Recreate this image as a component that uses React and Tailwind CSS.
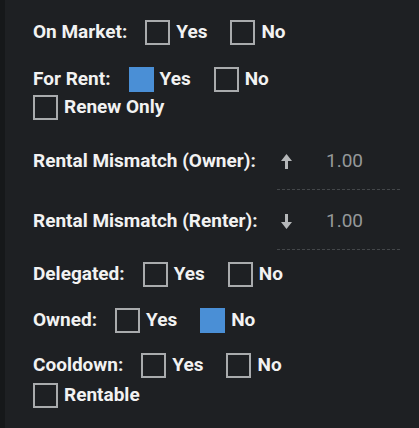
import React from 'react';

const Box = ({ checked }) => (
  <span
    className={`inline-block w-[25px] h-[25px] shrink-0 ${
      checked ? 'bg-[#4a8fd6]' : 'border-2 border-[#a9abad]'
    }`}
  />
);

const Check = ({ label, checked }) => (
  <label className="flex items-center gap-[6px]">
    <Box checked={checked} />
    <span>{label}</span>
  </label>
);

const YesNo = ({ title, yes, no, className = '' }) => (
  <div className={`flex items-center h-[25px] ${className}`}>
    <span className="mr-[18px]">{title}</span>
    <div className="flex items-center gap-[23px]">
      <Check label="Yes" checked={yes} />
      <Check label="No" checked={no} />
    </div>
  </div>
);

const Arrow = ({ down }) => (
  <svg width="13" height="17" viewBox="0 0 13 17" className={down ? 'rotate-180' : ''}>
    <path d="M6.5 1 L12 8 L8 8 L8 16 L5 16 L5 8 L1 8 Z" fill="#b5b7b9" />
  </svg>
);

const Mismatch = ({ title, down, className = '' }) => (
  <div className={`flex items-start ${className}`}>
    <span className="w-[244px] h-[24px] leading-[24px]">{title}</span>
    <div className="w-[123px] h-[41px] border-b border-dashed border-[#44474a] flex items-start">
      <div className="h-[24px] flex items-center pl-[3px] w-[49px]">
        <Arrow down={down} />
      </div>
      <span className="h-[24px] leading-[24px] font-normal text-[#95989a]">1.00</span>
    </div>
  </div>
);

export default function App() {
  return (
    <div className="w-[419px] h-[428px] flex bg-[#1e2023] overflow-hidden" style={{ fontFamily: 'Roboto, "Liberation Sans", sans-serif' }}>
      <div className="w-[5px] bg-[#16181a] shrink-0" />
      <div className="pl-[28px] pt-[20px] flex flex-col text-[19px] font-bold text-[#f2f2f2]">
        <YesNo title="On Market:" />
        <YesNo title="For Rent:" yes className="mt-[22px]" />
        <div className="flex items-center h-[25px] mt-[3px]">
          <Check label="Renew Only" />
        </div>
        <Mismatch title="Rental Mismatch (Owner):" className="mt-[29px]" />
        <Mismatch title="Rental Mismatch (Renter):" down className="mt-[19px]" />
        <YesNo title="Delegated:" className="mt-[12px]" />
        <YesNo title="Owned:" no className="mt-[21px]" />
        <YesNo title="Cooldown:" className="mt-[20px]" />
        <div className="flex items-center h-[25px] mt-[5px]">
          <Check label="Rentable" />
        </div>
      </div>
    </div>
  );
}
